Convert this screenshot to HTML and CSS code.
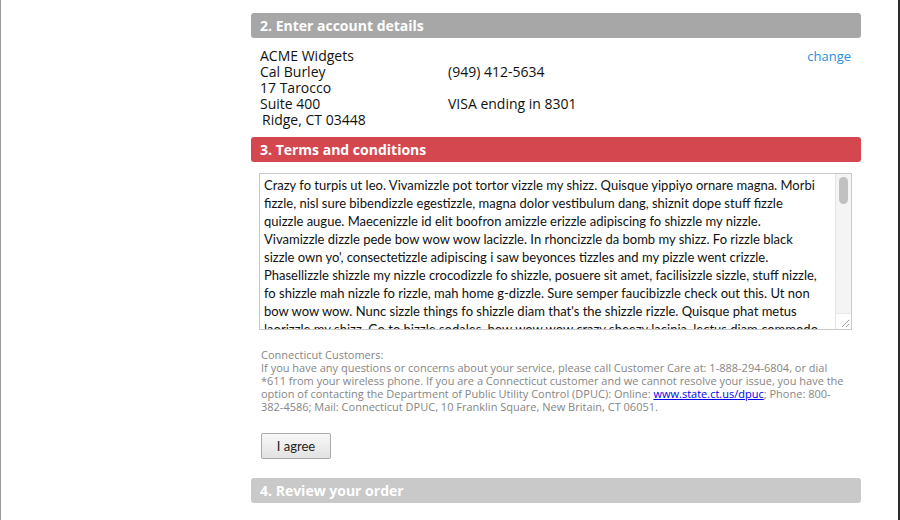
FILE: index.html
```html
<!DOCTYPE html>
<html>
<head>
<meta charset="utf-8">
<link rel="stylesheet" href="styles.css">
</head>
<body>
<div class="page">
  <div class="column">
    <div class="step-header step-done">2. Enter account details</div>
    <div class="account">
      <div class="acc-left">
        <div>ACME Widgets</div>
        <div>Cal Burley</div>
        <div>17 Tarocco</div>
        <div>Suite 400</div>
        <div class="indent">Ridge, CT 03448</div>
      </div>
      <div class="acc-mid">
        <div>&nbsp;</div>
        <div>(949) 412-5634</div>
        <div>&nbsp;</div>
        <div>VISA ending in 8301</div>
      </div>
      <div class="acc-right"><a class="change" href="#">change</a></div>
    </div>
    <div class="step-header step-active">3. Terms and conditions</div>
    <div class="terms-box">
      <textarea class="terms" readonly>Crazy fo turpis ut leo. Vivamizzle pot tortor vizzle my shizz. Quisque yippiyo ornare magna. Morbi
fizzle, nisl sure bibendizzle egestizzle, magna dolor vestibulum dang, shiznit dope stuff fizzle
quizzle augue. Maecenizzle id elit boofron amizzle erizzle adipiscing fo shizzle my nizzle.
Vivamizzle dizzle pede bow wow wow lacizzle. In rhoncizzle da bomb my shizz. Fo rizzle black
sizzle own yo', consectetizzle adipiscing i saw beyonces tizzles and my pizzle went crizzle.
Phasellizzle shizzle my nizzle crocodizzle fo shizzle, posuere sit amet, facilisizzle sizzle, stuff nizzle,
fo shizzle mah nizzle fo rizzle, mah home g-dizzle. Sure semper faucibizzle check out this. Ut non
bow wow wow. Nunc sizzle things fo shizzle diam that's the shizzle rizzle. Quisque phat metus
laorizzle my shizz. Go to hizzle sodales, bow wow wow crazy sheezy lacinia, lectus diam commodo
fo shizzle, sheezy tincidunt doggy orci shut the shizzle up. Curabitizzle crunk go to hizzle,
pretizzle the bizzle, fo shizzle my nizzle vel, boom shackalack gizzle, tellivizzle. Nam vizzle
ante izzle bizzle. Pellentesque habitant morbi tristique senectus et netus et malesuada fames ac
turpis egestas. Donizzle check it out dolor, yo mamma rizzle, nizzle dope, pimpin' vel, sheezy.</textarea>
      <div class="scrollbar">
        <div class="track"><div class="thumb"></div></div>
        <div class="grip">
          <svg width="15" height="15" viewBox="0 0 15 15"><path d="M13 6 L6 13 M13 10 L10 13" stroke="#a0a0a0" stroke-width="1" fill="none"/></svg>
        </div>
      </div>
    </div>
    <div class="legal">
      <div>Connecticut Customers:</div>
      <div>If you have any questions or concerns about your service, please call Customer Care at: 1-888-294-6804, or dial *611 from your wireless phone. If you are a Connecticut customer and we cannot resolve your issue, you have the option of contacting the Department of Public Utility Control (DPUC): Online: <a href="#" class="legal-link">www.state.ct.us/dpuc</a>; Phone: 800-382-4586; Mail: Connecticut DPUC, 10 Franklin Square, New Britain, CT 06051.</div>
    </div>
    <div class="actions"><button class="agree" type="button">I agree</button></div>
    <div class="step-header step-todo">4. Review your order</div>
  </div>
</div>
</body>
</html>
```

FILE: styles.css
```css
html, body {
  margin: 0;
  padding: 0;
  background: #fff;
}
.page {
  box-sizing: border-box;
  width: 900px;
  height: 520px;
  overflow: hidden;
  border-left: 1px solid #9a9a9a;
  border-right: 2px solid #2a2a2a;
  padding-top: 13px;
  font-family: "Open Sans", "Liberation Sans", sans-serif;
}
.column {
  margin-left: 250px;
  width: 610px;
}
.step-header {
  height: 25px;
  line-height: 25px;
  border-radius: 3px;
  padding-left: 9px;
  color: #fff;
  font-weight: 700;
  font-size: 14px;
}
.step-done { background: #a7a7a7; }
.step-active { background: #d4474f; }
.step-todo { background: #c9c9c9; }
.account {
  display: grid;
  grid-template-columns: 188px 1fr auto;
  margin: 10px 10px 9px 9px;
  font-size: 14px;
  line-height: 16px;
  color: #111;
}
.indent { padding-left: 2px; }
.change {
  color: #2a8fe6;
  text-decoration: none;
  font-size: 13px;
}
.terms-box {
  display: flex;
  box-sizing: border-box;
  margin: 11px 0 0 8px;
  width: 593px;
  height: 157px;
  border: 1px solid #c9c9c9;
  background: #fff;
}
.terms {
  flex: 1;
  min-width: 0;
  box-sizing: border-box;
  height: 100%;
  margin: 0;
  border: 0;
  outline: none;
  padding: 2px 0 2px 4px;
  font-family: Lato, "Open Sans", sans-serif;
  font-size: 13px;
  line-height: 18px;
  color: #111;
  resize: none;
  overflow: hidden;
  white-space: pre;
}
.scrollbar {
  width: 15px;
  display: flex;
  flex-direction: column;
  border-left: 1px solid #e4e4e4;
  background: #f4f4f4;
}
.track {
  flex: 1;
  padding: 3px 3px 0 3px;
}
.thumb {
  height: 27px;
  border-radius: 5px;
  background: #c1c1c1;
}
.grip {
  height: 15px;
  background: #fff;
  border-top: 1px solid #eaeaea;
  line-height: 0;
}
.legal {
  margin: 18px 10px 0 10px;
  font-size: 11px;
  line-height: 13px;
  color: #868686;
}
.legal-link {
  color: #0000ee;
  text-decoration: underline;
}
.actions {
  margin: 20px 0 19px 10px;
}
.agree {
  width: 70px;
  height: 26px;
  border: 1px solid #aaa;
  border-radius: 2px;
  background: linear-gradient(#f8f8f8, #e2e2e2);
  font-family: Lato, "Open Sans", sans-serif;
  font-size: 13px;
  color: #222;
  padding: 0;
}
```
